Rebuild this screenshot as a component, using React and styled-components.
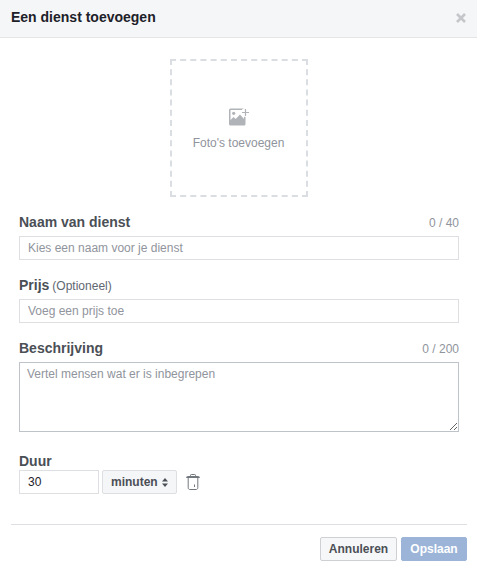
import React from "react";
import styled, { createGlobalStyle } from "styled-components";

const GlobalStyle = createGlobalStyle`
  html, body {
    margin: 0;
    padding: 0;
    background: #fff;
    font-family: "Liberation Sans", Arial, sans-serif;
  }
  * { box-sizing: border-box; }
`;

const Dialog = styled.div`
  width: 477px;
  height: 570px;
  display: flex;
  flex-direction: column;
  overflow: hidden;
`;

const Header = styled.div`
  height: 38px;
  flex: none;
  display: flex;
  align-items: center;
  justify-content: space-between;
  padding: 0 10px 2px 11px;
  background: #f5f6f7;
  border-bottom: 1px solid #e5e5e5;
`;

const Title = styled.h1`
  margin: 0 0 2px;
  font-size: 14px;
  font-weight: bold;
  color: #1d2129;
`;

const Close = styled.button`
  width: 12px;
  height: 12px;
  padding: 0;
  border: 0;
  background: none;
  display: flex;
  svg { display: block; }
`;

const Body = styled.div`
  padding: 21px 18px 0 19px;
  flex: 1;
`;

const PhotoBox = styled.div`
  width: 138px;
  height: 138px;
  margin: 0 auto 17px;
  position: relative;
  left: -0.5px;
  border: 2px dashed #dadde1;
  display: flex;
  flex-direction: column;
  align-items: center;
  padding-top: 47px;
  gap: 10px;
  color: #90949c;
  font-size: 12px;
`;

const Field = styled.div`
  margin-bottom: ${(p) => p.$gap || 17}px;
`;

const LabelRow = styled.div`
  display: flex;
  align-items: baseline;
  justify-content: space-between;
  height: 18px;
  margin-bottom: 4px;
`;

const Label = styled.label`
  font-size: 14px;
  font-weight: bold;
  color: #4b4f56;
`;

const Hint = styled.span`
  font-size: 12px;
  font-weight: normal;
  margin-left: 3px;
  color: #606770;
`;

const Counter = styled.span`
  font-size: 12px;
  color: #90949c;
`;

const TextInput = styled.input`
  display: block;
  width: ${(p) => p.$width || "100%"};
  height: 24px;
  padding: 0 8px;
  border: 1px solid #dddfe2;
  border-radius: 0;
  outline: none;
  font: 12px "Liberation Sans", Arial, sans-serif;
  color: #1d2129;
  &::placeholder { color: #90949c; opacity: 1; }
`;

const TextArea = styled.textarea`
  display: block;
  width: 100%;
  height: 70px;
  padding: 4px 7px;
  border: 1px solid #bec3c9;
  border-radius: 0;
  outline: none;
  font: 12px "Liberation Sans", Arial, sans-serif;
  color: #1d2129;
  &::placeholder { color: #90949c; opacity: 1; }
`;

const DurationRow = styled.div`
  display: flex;
  align-items: center;
`;

const SelectButton = styled.button`
  height: 24px;
  width: 75px;
  margin-left: 3px;
  padding: 0 0 0 8px;
  display: flex;
  align-items: center;
  gap: 4px;
  border: 1px solid #dddfe2;
  border-radius: 2px;
  background: #f5f6f7;
  color: #4b4f56;
  font: bold 12px "Liberation Sans", Arial, sans-serif;
`;

const TrashButton = styled.button`
  margin-left: 9px;
  padding: 0;
  border: 0;
  background: none;
  display: flex;
  svg { display: block; }
`;

const Footer = styled.div`
  margin: 0 10px 0 11px;
  height: 46px;
  padding-top: 12px;
  border-top: 1px solid #dddfe2;
  display: flex;
  justify-content: flex-end;
  gap: 4px;
`;

const Button = styled.button`
  height: 24px;
  width: ${(p) => p.$width}px;
  padding: 0;
  border-radius: 2px;
  font: bold 12px "Liberation Sans", Arial, sans-serif;
  border: 1px solid ${(p) => (p.$primary ? "#9cb4d8" : "#ced0d4")};
  background: ${(p) => (p.$primary ? "#9cb4d8" : "#f6f7f9")};
  color: ${(p) => (p.$primary ? "#fff" : "#4b4f56")};
`;

const PhotoIcon = () => (
  <svg width="20" height="18" viewBox="0 0 20 18" aria-hidden="true">
    <rect x="0" y="0.5" width="16.5" height="17" rx="1.5" fill="#b0b3b8" />
    <rect x="1.5" y="2" width="13.5" height="10" fill="#fff" />
    <circle cx="16.5" cy="4.5" r="4.5" fill="#fff" />
    <path fill="#b0b3b8" d="M15.9 1h1.2v2.9H20v1.2h-2.9V8h-1.2V5.1H13V3.9h2.9z" />
    <circle cx="4.7" cy="5.3" r="1.6" fill="#b0b3b8" />
    <path fill="#b0b3b8" d="M1.5 12l3-3 2.2 2 4.3-4.4 4 4.4v2H1.5z" />
  </svg>
);

const TrashIcon = () => (
  <svg width="14" height="16" viewBox="0 0 14 16" fill="none" stroke="#73777e" strokeWidth="1" aria-hidden="true">
    <path d="M.5 3.5c0-.6.4-1 1-1h11c.6 0 1 .4 1 1" />
    <path d="M.5 3.5h13" />
    <path d="M4.5 2.3V1.3c0-.5.3-.8.8-.8h3.4c.5 0 .8.3.8.8v1" />
    <path d="M2.2 3.7v10.1c0 .9.6 1.7 1.5 1.7h6.6c.9 0 1.5-.8 1.5-1.7V3.7" />
    <path d="M8.5 10.5v2.5" />
  </svg>
);

const App = () => {
  return (
    <>
      <GlobalStyle />
      <Dialog>
        <Header>
          <Title>Een dienst toevoegen</Title>
          <Close aria-label="Sluiten">
            <svg width="12" height="12" viewBox="0 0 12 12">
              <path d="M2 2l8 8M10 2l-8 8" stroke="#c4c6ca" strokeWidth="2.6" />
            </svg>
          </Close>
        </Header>
        <Body>
          <PhotoBox>
            <PhotoIcon />
            <span>Foto's toevoegen</span>
          </PhotoBox>
          <Field>
            <LabelRow>
              <Label>Naam van dienst</Label>
              <Counter>0 / 40</Counter>
            </LabelRow>
            <TextInput placeholder="Kies een naam voor je dienst" />
          </Field>
          <Field>
            <LabelRow>
              <Label>
                Prijs<Hint>(Optioneel)</Hint>
              </Label>
            </LabelRow>
            <TextInput placeholder="Voeg een prijs toe" />
          </Field>
          <Field $gap={20}>
            <LabelRow>
              <Label>Beschrijving</Label>
              <Counter>0 / 200</Counter>
            </LabelRow>
            <TextArea placeholder="Vertel mensen wat er is inbegrepen" />
          </Field>
          <Label>Duur</Label>
          <DurationRow>
            <TextInput $width="80px" defaultValue="30" />
            <SelectButton>
              minuten
              <svg width="6" height="9" viewBox="0 0 6 9">
                <path fill="#4b4f56" d="M3 0l3 3.6H0zM3 9L0 5.4h6z" />
              </svg>
            </SelectButton>
            <TrashButton aria-label="Verwijderen">
              <TrashIcon />
            </TrashButton>
          </DurationRow>
        </Body>
        <Footer>
          <Button $width={77}>Annuleren</Button>
          <Button $primary $width={66}>Opslaan</Button>
        </Footer>
      </Dialog>
    </>
  );
};

export default App;
